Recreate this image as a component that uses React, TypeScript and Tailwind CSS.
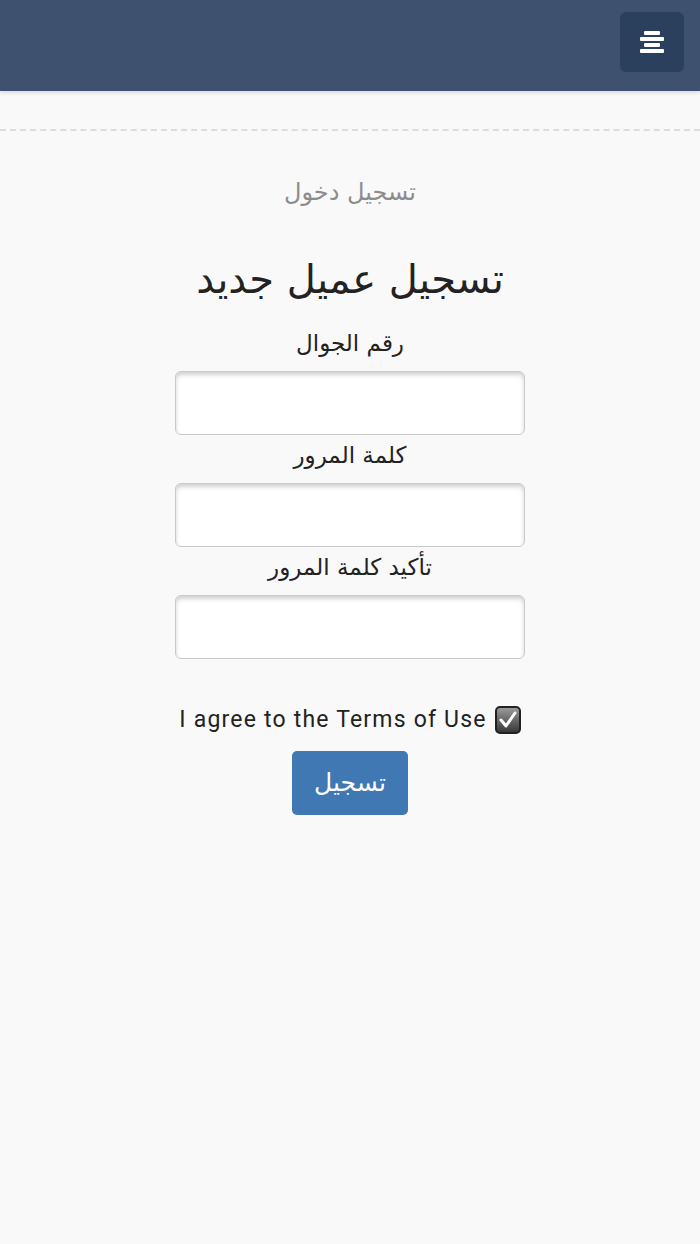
import { useState } from 'react';

const Field = ({ label }: { label: string }) => {
  return (
    <div className="flex flex-col items-center">
      <label className="text-[23px] leading-[30px] text-[#222]">{label}</label>
      <input
        type="text"
        className="mt-[13px] h-[64px] w-[350px] rounded-[6px] border border-[#c9c9c9] bg-white shadow-[inset_0_3px_4px_rgba(0,0,0,0.18)] outline-none"
      />
    </div>
  );
};

const App = () => {
  const [agree, setAgree] = useState(true);

  return (
    <div className="min-h-[1244px] bg-[#f9f9f9] font-['DejaVu_Sans',sans-serif]">
      <header className="flex h-[91px] items-start justify-end bg-[#3e5270] px-[16px] pt-[12px] shadow-[0_2px_4px_rgba(0,0,0,0.12)]">
        <button className="flex h-[60px] w-[64px] items-center justify-center rounded-[6px] bg-[#2b405c]">
          <svg width="26" height="24" viewBox="0 0 26 24">
            <rect x="5" y="1" width="16" height="4" rx="1" fill="#fff" />
            <rect x="1" y="7" width="24" height="4" rx="1" fill="#fff" />
            <rect x="5" y="13" width="16" height="4" rx="1" fill="#fff" />
            <rect x="1" y="19" width="24" height="4" rx="1" fill="#fff" />
          </svg>
        </button>
      </header>

      <div className="mt-[38px] border-t-2 border-dashed border-[#dcdcdc]" />

      <div dir="rtl" className="flex flex-col items-center">
        <a className="mt-[46px] text-[24px] leading-[30px] text-[#8c8c8c]">تسجيل دخول</a>
        <h1 className="mt-[50px] text-[40px] leading-[44px] text-[#222]">تسجيل عميل جديد</h1>
        <div className="mt-[27px] flex flex-col gap-[5px]">
          <Field label="رقم الجوال" />
          <Field label="كلمة المرور" />
          <Field label="تأكيد كلمة المرور" />
        </div>

        <label className="mt-[46px] flex items-center gap-[8px] font-['Roboto',sans-serif] text-[23px] leading-[30px] tracking-[1.2px] text-[#222]">
          <button
            type="button"
            onClick={() => setAgree(!agree)}
            className="flex h-[28px] w-[26px] items-center justify-center rounded-[5px] border-2 border-[#222] bg-gradient-to-b from-[#9a9a9a] to-[#3a3a3a]"
          >
            {agree && (
              <svg width="20" height="20" viewBox="0 0 20 20">
                <path d="M3 10 L8 16 L17 3" fill="none" stroke="#fff" strokeWidth="3" strokeLinecap="round" strokeLinejoin="round" />
              </svg>
            )}
          </button>
          <span dir="ltr">I agree to the Terms of Use</span>
        </label>

        <button className="mt-[16px] h-[64px] w-[116px] rounded-[5px] bg-[#3f78b3] text-[25px] text-white">
          تسجيل
        </button>
      </div>
    </div>
  );
};

export default App;
